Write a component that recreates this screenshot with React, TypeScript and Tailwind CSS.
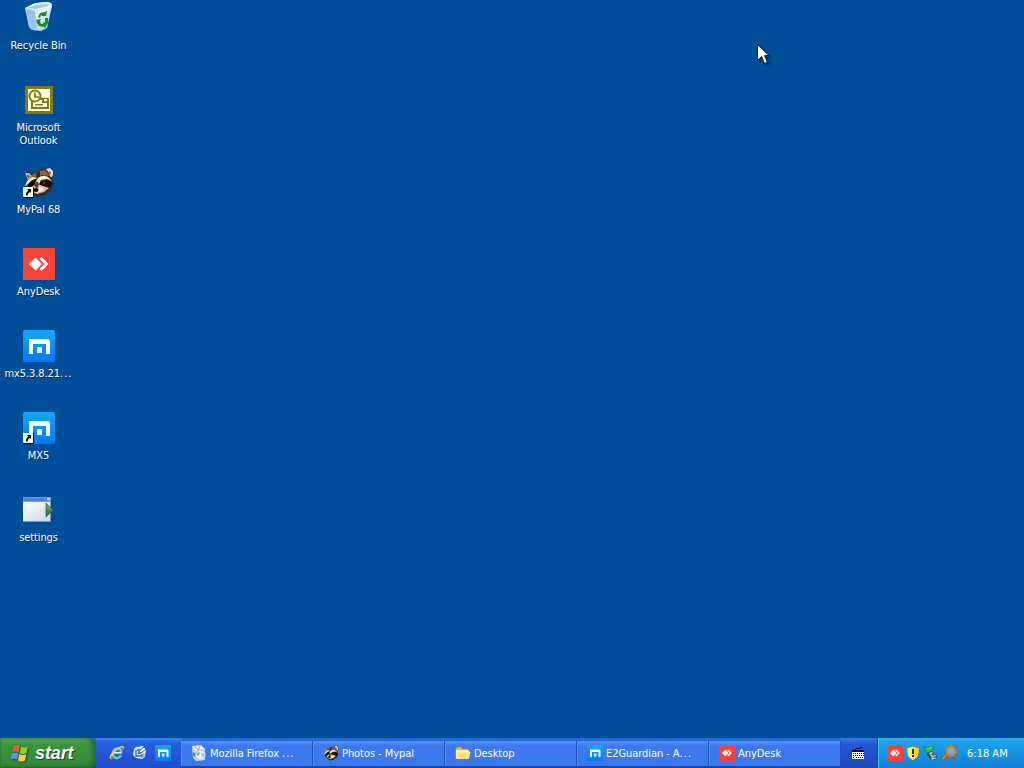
import type { ReactNode } from "react";

type IconProps = { className?: string };

function RecycleBin() {
  return (
    <svg viewBox="0 0 32 32" className="size-8">
      <defs>
        <linearGradient id="bin" x1="0" y1="0" x2="1" y2="1">
          <stop offset="0" stopColor="#a5ccef" />
          <stop offset=".5" stopColor="#e9f5fc" />
          <stop offset="1" stopColor="#8cb8dc" />
        </linearGradient>
      </defs>
      <path d="M2 6 10 2 20 0 28 1 29 4 24 26 18 29 9 28 6 25Z" fill="url(#bin)" />
      <path d="M2 6 12 8 27 4 29 2 26 0 12 1Z" fill="#e3f2fb" />
      <path d="M5 6 13 3 26 2 24 5 12 7Z" fill="#a4c8e3" />
      <path d="M3 7 12 9 14 27 9 28 6 25Z" fill="#7fb1e6" opacity=".7" />
      <path d="M12 8 28 4" stroke="#fff" strokeWidth="1" />
      <path d="m15 15 2-4 5-1 2-1-1 5-5 0 1-1-1 0-1 3Z" fill="#149019" />
      <path d="m13 18 5-1-1 2 1 3 2 0v3l-4-1-2-3Z" fill="#149019" />
      <path d="m22 16 3 0 0 5-2 3-1 2-3-3 2-3 1 1Z" fill="#149019" />
    </svg>
  );
}

function Outlook() {
  return (
    <svg viewBox="0 0 32 32" className="size-8">
      <path d="M2 2h28v28H2z" fill="#827b0c" />
      <path d="M5 5h22v22H5z" fill="#fffff0" />
      <path d="M9 17v7h16v-9H16" fill="none" stroke="#827b0c" strokeWidth="2" />
      <path d="M19 14h7v5h-7z" fill="#827b0c" />
      <path d="M21 15h3v2h-3z" fill="#fffff0" />
      <path d="M12 20h8v1.500h-8z" fill="#827b0c" />
      <circle cx="12" cy="12" r="5.500" fill="#fffff0" stroke="#827b0c" strokeWidth="2" />
      <path d="M12 8.500V13h4" fill="none" stroke="#827b0c" strokeWidth="1.700" />
    </svg>
  );
}

function Raccoon({ className = "size-8" }: IconProps) {
  return (
    <svg viewBox="0 0 32 32" className={className}>
      <path d="m2 7 3-1 5 2 6-4 7-1 4-1 3 2 1 4-2 5 2 6-3 5-6 5-7 2-4-2-4-4-5-5 3-6-3-4Z" fill="#3c281d" />
      <path d="m2 7 4 0 3 3-4 4Z" fill="#c0b4a4" />
      <path d="m4 9 3 1-2 2Z" fill="#5b3b2b" />
      <path d="m23 3 4-1 3 3 0 4-2 3-2-5Z" fill="#eadbc7" />
      <path d="m26 5 2 1 0 3-2-2Z" fill="#a5674b" />
      <path d="M9 9q5-4 13-5l5 6-8-1-5 3-6 1Z" fill="#8a6247" />
      <path d="m13 7 4-2 0 6-3 2Z" fill="#3a261c" />
      <path d="m4 15 5-4 5 1-3 2-5 4-4 2Z" fill="#f6e8d2" />
      <path d="M15 12q5-4 10-1l4 4-5-2-6 1-2 4-3 2-1-3Z" fill="#f8ead6" />
      <path d="m4 19 5-5 4-1-1 5-4 3Z" fill="#0e0a09" />
      <path d="m17 16 7-2 5 3-2 5-7-2-3-1Z" fill="#120c0a" />
      <path d="m10 20 4-3 3 2 9 3-5 4-7 2-4-2-3-4Z" fill="#dfbd99" />
      <path d="m11 19 3-4 2 3-2 5Z" fill="#513728" />
      <path d="m16 21 5 1-2 3-5 2Z" fill="#fbefdd" />
      <ellipse cx="13" cy="24" rx="2.700" ry="2" fill="#09090a" />
      <circle cx="21" cy="17" r=".8" fill="#ad815c" />
    </svg>
  );
}

function AnyDesk({ className = "size-8" }: IconProps) {
  return (
    <svg viewBox="0 0 32 32" className={className}>
      <path d="M0 0h32v32H0z" fill="#f8423c" />
      <path d="m6 16 6.500-6.500L19 16l-6.500 6.500ZM16.500 11l2-2 7 7-7 7-2-2 5-5Z" fill="#fff" />
    </svg>
  );
}

function Maxthon({ className = "size-8" }: IconProps) {
  return (
    <svg viewBox="0 0 32 32" className={className}>
      <defs>
        <linearGradient id="mx" x2="0" y2="1">
          <stop stopColor="#12a8f4" />
          <stop offset="1" stopColor="#0878f3" />
        </linearGradient>
      </defs>
      <rect width="32" height="32" rx="2" fill="url(#mx)" />
      <path d="M6 9h18q3 0 3 3v12h-4V14H10v10H6Z" fill="#fff" />
      <path d="M14 17h5v6h-5z" fill="#e8f6ff" />
    </svg>
  );
}

function Settings() {
  return (
    <svg viewBox="0 0 32 32" className="size-8">
      <defs>
        <linearGradient id="win" x2="1" y2="1">
          <stop stopColor="#fff" />
          <stop offset="1" stopColor="#cbd4e9" />
        </linearGradient>
        <linearGradient id="arrow" x2="0" y2="1">
          <stop stopColor="#82b967" />
          <stop offset="1" stopColor="#20631c" />
        </linearGradient>
      </defs>
      <path d="M0 3h28v25H0z" fill="#6e97dc" />
      <path d="M1 4h23v3H1z" fill="#5280df" />
      <path d="M24 4h3v2h-3z" fill="#b9cbf5" />
      <path d="M0 8h27v19H0z" fill="url(#win)" />
      <path d="m23 9 7 7-7 7Z" fill="url(#arrow)" stroke="#2c6d30" strokeWidth=".8" />
    </svg>
  );
}

function ShortcutArrow() {
  return (
    <svg viewBox="0 0 11 11" className="absolute bottom-0 left-0 size-[11px]">
      <path d="M0 0h11v11H0z" fill="#000" />
      <path d="M0 0h10v10H0z" fill="#fff" />
      <path d="M4 2h4v4L6.800 5Q4.500 6 4.500 8.500H3V7q0-2 2.300-3.500Z" fill="#000" />
    </svg>
  );
}

function Dots() {
  return <span className="tracking-[1px]">...</span>;
}

function DesktopIcon({ children, label, shortcut = false }: { children: ReactNode; label: ReactNode; shortcut?: boolean }) {
  return (
    <div className="flex h-[82px] w-[77px] flex-col items-center">
      <div className="relative ml-px size-8">
        {children}
        {shortcut && <ShortcutArrow />}
      </div>
      <div className="mt-[5px] text-center text-[11px] leading-[13px] tracking-[-0.1px] whitespace-nowrap text-white [text-shadow:1px_1px_1px_#002b60]">{label}</div>
    </div>
  );
}

function WindowsFlag() {
  return (
    <svg viewBox="0 0 20 18" className="h-[18px] w-5 shrink-0 drop-shadow-[1px_1px_1px_#174f17]">
      <path d="M3.500 2q3.500-2 6.500 0L8.500 8.500q-3-2-6.500 0Z" fill="#ed5a32" />
      <path d="M11 2.500q3 2 7 0L16.500 9q-4 2-7 0Z" fill="#8bce39" />
      <path d="M2 9.500q3.500-2 6.500 0l-1.500 6q-3-2-6.500 0Z" fill="#5d93f4" />
      <path d="M9.300 10q3 2 7 0L15 16.500q-4 2-7 0Z" fill="#ffcb3c" />
    </svg>
  );
}

function Explorer() {
  return (
    <svg viewBox="0 0 16 16" className="size-4">
      <path d="M12 10.500Q10 14 6 12.500 2.500 10.500 4 7 5.500 3 9.500 3.500 13 4.500 12 8H5" fill="none" stroke="#63c8ff" strokeWidth="2.500" />
      <path d="M5 7.500h7" stroke="#d9f5ff" strokeWidth="1" />
      <path d="M1.500 14Q-1 12 4 6.500 10 .5 14 1q2 1-.5 4.500 1-3-.5-3-3 0-8 5.500-4 5-2.500 5.500 1.500.5 4-1.500-3.500 3-5 2Z" fill="#ffc740" />
    </svg>
  );
}

function ShowDesktop() {
  return (
    <svg viewBox="0 0 16 16" className="size-4">
      <path d="m4 2 7-1 3 3-1 8-3 2-6-1-3-3 1-6Z" fill="#dcecf8" />
      <path d="M5 5h5M4 5v6h6V9" fill="none" stroke="#2c649f" strokeWidth="1.300" />
      <path d="m6 9 1-3 5-4 2 2-5 4Z" fill="#f7fbff" stroke="#2c649f" strokeWidth="1" />
      <path d="m7 7 2 1" stroke="#2c649f" />
      <path d="M12 8v4H8" fill="none" stroke="#6d9cc6" />
    </svg>
  );
}

function Installer() {
  return (
    <svg viewBox="0 0 16 16" className="size-4">
      <path d="m1 1 9-1 4 4v11l-9 1-3-3Z" fill="#d5dbe6" />
      <path d="m2 2 8-1 3 3-8 2Z" fill="#f6f5f0" />
      <path d="m4 2 4 3M9 1 7 5" stroke="#c98787" />
      <circle cx="9.500" cy="10" r="5.200" fill="#e6effa" stroke="#8ca2bc" strokeWidth=".7" />
      <path d="m5 9 3-3 1 3-2 2Z" fill="#86bea0" />
      <path d="m10 8 4 1-1 3-3-1Z" fill="#b5b5df" />
      <path d="m2 7 2 1v4l-2-1Z" fill="#5589b5" />
      <circle cx="9.500" cy="10" r="1" fill="#fff" />
    </svg>
  );
}

function Folder() {
  return (
    <svg viewBox="0 0 16 16" className="size-4">
      <path d="m.5 4 1-2h5l1 2h6l1 2-.5 8H1.500l-1-1Z" fill="#e8b947" stroke="#a77b21" strokeWidth=".7" />
      <path d="M1 5h12v8H1Z" fill="#fff0a5" />
      <path d="M3 7h12.500L14 14H1.500Z" fill="#ffe07a" />
      <path d="M3 7h12" stroke="#fff7bf" />
    </svg>
  );
}

function Keyboard() {
  return (
    <svg viewBox="0 0 14 14" className="mr-[2px] h-[14px] w-[14px]" shapeRendering="crispEdges">
      <path d="M9 1h2v1H9ZM5 2h4v1H5ZM4 3h1v2H4Z" fill="#081033" />
      <path d="M1 5h12v8H1Z" fill="#eef3ff" />
      <path d="M1 4h12v2H1Z" fill="#081033" />
      <path d="M2 7.500h11M2 9.500h11M2 11.500h2M5 11.500h5M11 11.500h2" stroke="#081033" strokeWidth="1" strokeDasharray="1 1" />
    </svg>
  );
}

function Shield() {
  return (
    <svg viewBox="0 0 16 16" className="size-4">
      <path d="M8 .7 10 2l4 .5V8q0 4.500-6 7.500Q2 12.500 2 8V2.500L6 2Z" fill="#fffbd0" stroke="#77744c" />
      <path d="M8 2v12q-5-3-5-6V3Z" fill="#fff36a" />
      <path d="M8 2v12q5-3 5-6V3Z" fill="#f6d51c" />
      <path d="M7 4h2v5H7zM7 10h2v2H7z" fill="#343414" />
    </svg>
  );
}

function SafelyRemove() {
  return (
    <svg viewBox="0 0 16 16" className="size-4">
      <path d="m4 8 5-2 5 5-1 3-5 1-4-5Z" fill="#304e62" />
      <path d="m6 8 3-1 4 4-4 2Z" fill="#c2d3d8" />
      <path d="m8 9 2-1 2 2-2 1Z" fill="#385661" />
      <path d="m8 14 5-1" stroke="#d8e4e8" />
      <path d="M1 1 4 3l6-2 1 2-2 3-4 1-1 2-3-5Z" fill="#2cb94a" stroke="#16703b" strokeWidth=".6" />
      <path d="m4 4 5-2" stroke="#7de169" />
    </svg>
  );
}

function Magnifier() {
  return (
    <svg viewBox="0 0 16 16" className="size-4">
      <path d="M6 9.500 1.500 14" stroke="#a64b08" strokeWidth="3.200" />
      <path d="M6 9.500 1.500 14" stroke="#ee8420" strokeWidth="1.800" />
      <circle cx="10" cy="6" r="5" fill="#63b4e0" stroke="#a94e12" strokeWidth="2.400" />
      <circle cx="10" cy="6" r="5" fill="none" stroke="#f18a24" strokeWidth="1.300" />
      <path d="m11 13 3 1" fill="none" stroke="#974a12" />
    </svg>
  );
}

function Task({ icon, children }: { icon: ReactNode; children: ReactNode }) {
  return (
    <div className="flex h-[25px] w-[132px] shrink-0 items-center border-r border-l border-r-[#1e4dc2] border-l-[#5c94fa] bg-linear-to-b from-[#5794fb] from-0% via-[#3c78ef] via-20% to-[#3978ed] pl-[9px] text-[11px] text-white">
      {icon}
      <span className="ml-[3px] pt-[2px] tracking-[-0.06px] whitespace-nowrap">{children}</span>
    </div>
  );
}

function Taskbar() {
  return (
    <footer className="flex h-[30px] w-full bg-linear-to-b from-[#246cdd] from-0% via-[#245edb] via-20% to-[#1941ad]">
      <div className="flex h-full w-24 shrink-0 items-center rounded-r-[7px] bg-linear-to-b from-[#69a965] from-0% via-[#3b9440] via-20% to-[#35883a] pl-[10px] shadow-[inset_-4px_0_5px_#246d2b,inset_0_-1px_2px_#225d25]">
        <WindowsFlag />
        <span className="ml-[5px] font-['Liberation_Sans',Arial,sans-serif] text-[18px] leading-5 font-bold italic tracking-[-0.1px] text-white [font-stretch:normal] [text-shadow:1px_1px_1px_#174518]">start</span>
      </div>
      <div className="flex w-[85px] shrink-0 items-center gap-[7px] bg-linear-to-b from-[#3b83ef] from-0% via-[#2860df] via-16% to-[#1e4cc8] pl-[13px]">
        <Explorer />
        <ShowDesktop />
        <Maxthon className="size-4" />
      </div>
      <div className="flex w-[660px] shrink-0 items-center">
        <Task icon={<Installer />}>Mozilla Firefox <Dots /></Task>
        <Task icon={<Raccoon className="size-4" />}>Photos - Mypal</Task>
        <Task icon={<Folder />}>Desktop</Task>
        <Task icon={<Maxthon className="size-4" />}>E2Guardian - A<Dots /></Task>
        <Task icon={<AnyDesk className="size-4" />}>AnyDesk</Task>
      </div>
      <div className="flex w-[36px] shrink-0 items-center justify-center bg-linear-to-b from-[#3878e5] via-[#2457d5] via-20% to-[#1d48b8]">
        <Keyboard />
      </div>
      <div className="flex flex-1 items-center border-l border-[#0b48a8] bg-linear-to-b from-[#38aaf0] from-0% via-[#18a0ed] via-20% to-[#1380d4] pl-[9px] shadow-[inset_1px_0_#4bc7fb]">
        <div className="flex gap-[2px]">
          <AnyDesk className="size-4" />
          <Shield />
          <SafelyRemove />
          <Magnifier />
        </div>
        <span className="ml-[10px] pt-[2px] text-[11px] whitespace-nowrap text-white">6:18 AM</span>
      </div>
    </footer>
  );
}

export default function App() {
  return (
    <div className="relative flex h-screen w-screen flex-col overflow-hidden bg-[#004e98] font-['DejaVu_Sans_Condensed','DejaVu_Sans',sans-serif] [font-stretch:condensed]">
      <main className="flex min-h-0 flex-1 flex-col pt-[2px]">
        <DesktopIcon label="Recycle Bin"><RecycleBin /></DesktopIcon>
        <DesktopIcon label={<>Microsoft<br />Outlook</>}><Outlook /></DesktopIcon>
        <DesktopIcon label="MyPal 68" shortcut><Raccoon /></DesktopIcon>
        <DesktopIcon label="AnyDesk"><AnyDesk /></DesktopIcon>
        <DesktopIcon label={<>mx5.3.8.21<Dots /></>}><Maxthon /></DesktopIcon>
        <DesktopIcon label="MX5" shortcut><Maxthon /></DesktopIcon>
        <DesktopIcon label="settings"><Settings /></DesktopIcon>
      </main>
      <Taskbar />
      <svg viewBox="0 0 14 22" className="absolute top-[44px] left-[757px] h-[22px] w-[14px] drop-shadow-[2px_2px_1px_#00336b]">
        <path d="M.5.500v16l4-4 3 7 3-1.300-3-6.700H12Z" fill="#fff" stroke="#061d36" strokeWidth="1" />
      </svg>
    </div>
  );
}
